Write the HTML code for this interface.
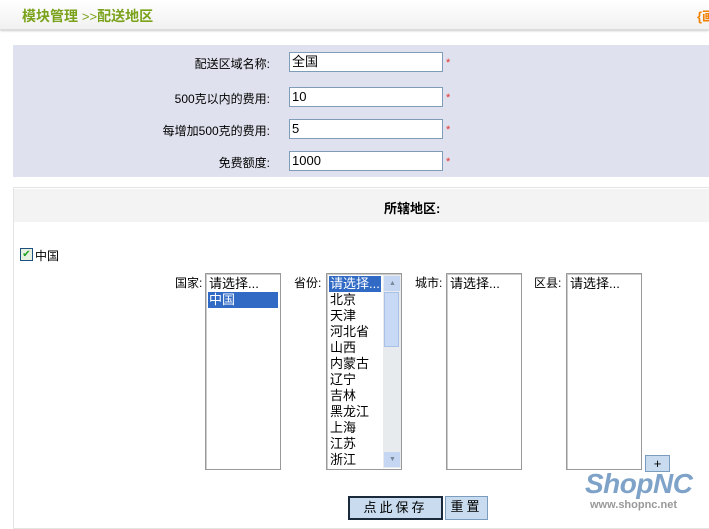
<!DOCTYPE html>
<html><head><meta charset="utf-8"><style>
body{margin:0;width:709px;height:520px;overflow:hidden;background:#fff;font-family:"Liberation Sans","Noto Sans CJK SC",sans-serif;font-size:12px;color:#000;position:relative}
.a{position:absolute}
.hdr{left:0;top:0;width:709px;height:29px;background:linear-gradient(#fff,#f1f1f1);border-bottom:1px solid #ddd;box-shadow:0 1px 2px #ccc}
.ttl{left:22px;top:6px;color:#7aa21a;font-size:14px;font-weight:bold}
.panel{left:13px;top:45px;width:696px;height:132px;background:#dfe2ee}
.lbl{width:257px;text-align:right;left:13px}
.inp{left:289px;width:150px;height:18px;border:1px solid #7f9db9;background:#fff;font-size:13px;line-height:18px;padding-left:2px;box-sizing:content-box}
.star{left:446px;color:#e03030;font-size:11px}
.box{left:13px;top:187px;width:696px;height:340px;border:1px solid #e4e4e4;border-right:0}
.bh{left:14px;top:189px;width:695px;height:33px;background:#f3f3f3}
.sel{box-sizing:border-box;width:76px;height:197px;border:1px solid #999;box-shadow:inset 1px 1px 0 #ccc;background:#fff;font-size:13px;line-height:16px;padding:2px}
.sel div{padding-left:1px;white-space:nowrap}
.hl{background:#316ac5;color:#fff}
.btn{background:#c9dcef;border:1px solid #7a9cbf;font-size:13px;text-align:center;line-height:20px;letter-spacing:3px}
</style></head><body>
<div class="a hdr"></div>
<div class="a ttl">模块管理 <span style="font-weight:normal;font-size:13px">&gt;&gt;</span>配送地区</div>
<div class="a" style="left:697px;top:6px;color:#f08000;font-weight:bold;font-size:13px">{画</div>
<div class="a panel"></div>
<div class="a lbl" style="top:55px">配送区域名称:</div>
<div class="a inp" style="top:52px">全国</div><div class="a star" style="top:57px">*</div>
<div class="a lbl" style="top:90px">500克以内的费用:</div>
<div class="a inp" style="top:87px">10</div><div class="a star" style="top:92px">*</div>
<div class="a lbl" style="top:122px">每增加500克的费用:</div>
<div class="a inp" style="top:119px">5</div><div class="a star" style="top:124px">*</div>
<div class="a lbl" style="top:154px">免费额度:</div>
<div class="a inp" style="top:151px">1000</div><div class="a star" style="top:156px">*</div>
<div class="a box"></div>
<div class="a bh"></div>
<div class="a" style="left:384px;top:198px;font-weight:bold;font-size:13px">所辖地区:</div>
<div class="a" style="left:20px;top:248px;width:11px;height:11px;border:1px solid #1c5180;background:#e8f0e0;color:#21a121;font-size:10px;line-height:11px;text-align:center">✔</div>
<div class="a" style="left:35px;top:247px">中国</div>
<div class="a" style="left:175px;top:274px">国家:</div>
<div class="a sel" style="left:205px;top:273px"><div>请选择...</div><div class="hl">中国</div></div>
<div class="a" style="left:294px;top:274px">省份:</div>
<div class="a sel" style="left:326px;top:273px"><div style="width:51px" class="hl">请选择...</div><div>北京</div><div>天津</div><div>河北省</div><div>山西</div><div>内蒙古</div><div>辽宁</div><div>吉林</div><div>黑龙江</div><div>上海</div><div>江苏</div><div>浙江</div>
<div class="a" style="left:56px;top:1px;width:17px;height:193px;background:#e8ebee"></div>
<div class="a" style="left:57px;top:2px;width:15px;height:15px;background:#c4d6f2;font-size:7px;text-align:center;color:#789">▲</div>
<div class="a" style="left:57px;top:18px;width:15px;height:55px;background:#c7d9f5;border:1px solid #a9c1e6;box-sizing:border-box"></div>
<div class="a" style="left:57px;top:178px;width:15px;height:15px;background:#c4d6f2;font-size:7px;text-align:center;color:#789">▼</div></div>
<div class="a" style="left:415px;top:274px">城市:</div>
<div class="a sel" style="left:446px;top:273px"><div>请选择...</div></div>
<div class="a" style="left:534px;top:274px">区县:</div>
<div class="a sel" style="left:566px;top:273px"><div>请选择...</div></div>
<div class="a btn" style="left:645px;top:455px;width:23px;height:15px;line-height:15px;letter-spacing:0">+</div>
<div class="a btn" style="left:348px;top:496px;width:91px;height:20px;border:2px solid #1a2a3a">点此保存</div>
<div class="a btn" style="left:445px;top:496px;width:41px;height:22px">重置</div>
<div class="a" style="left:585px;top:468px;color:#7ea2c8;font-size:28px;font-weight:bold;font-style:italic;letter-spacing:-0.5px">ShopNC</div>
<div class="a" style="left:590px;top:499px;color:#999;font-size:11px;font-weight:bold">www.shopnc.net</div>
</body></html>
